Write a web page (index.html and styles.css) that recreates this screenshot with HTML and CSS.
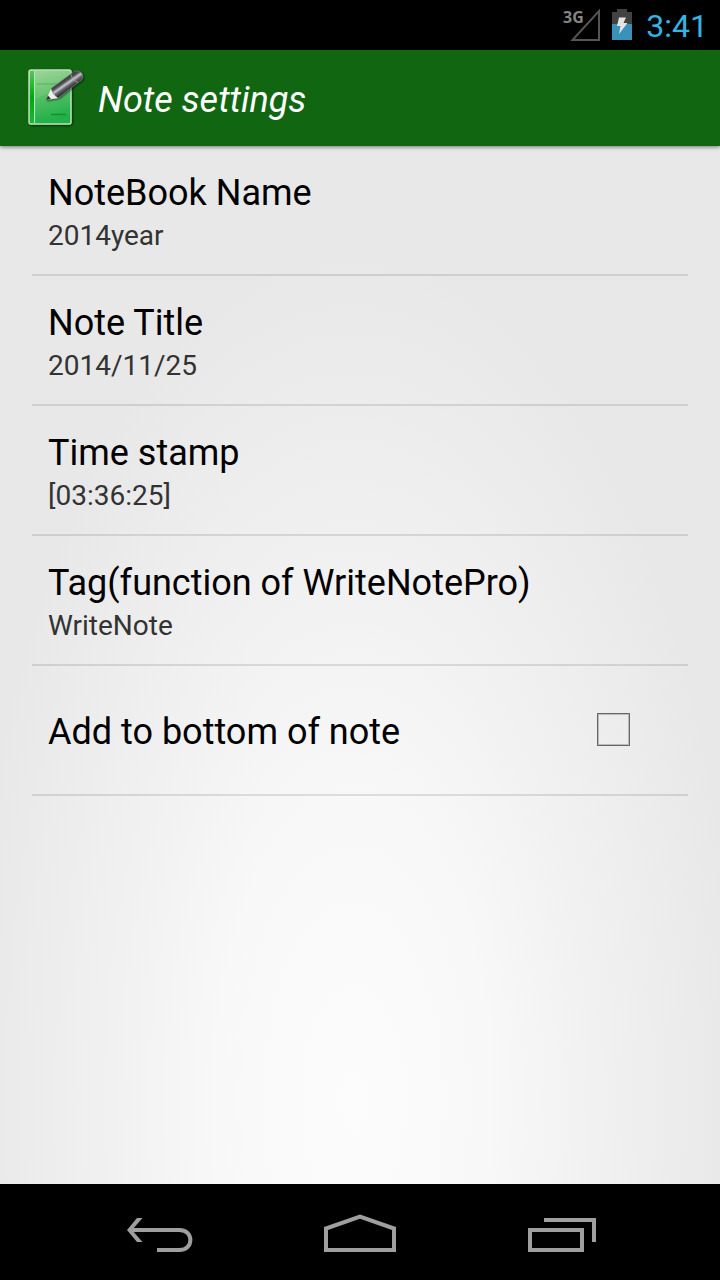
FILE: index.html
```
<!DOCTYPE html>
<html lang="en">

<head>
    <meta charset="UTF-8">
    <meta name="viewport" content="width=device-width, initial-scale=1.0">
    <title>Note settings</title>
    <link rel="stylesheet" href="styles.css">
</head>

<body>

    <div class="status-bar">
        <svg class="signal" width="44" height="48" viewBox="-4 -6 44 48">
            <path d="M36 4V33H9.500Z" fill="none" stroke="#555" stroke-width="2" />
            <text x="0" y="16" class="network">3G</text>
        </svg>
        <svg class="battery" width="22" height="36" viewBox="0 0 22 36">
            <path d="M6 2H16V5H21V17H1V5H6Z" fill="#424242" />
            <path d="M1 17H21V33H1Z" fill="#3993b9" />
            <path d="M8 10.500H15L12.500 16H16.500L8 27L9.500 19H6Z" fill="#e4e4e4" />
        </svg>
        <span class="clock">3:41</span>
    </div>

    <header class="action-bar">
        <svg class="app-icon" width="64" height="64" viewBox="0 0 64 64">
            <defs>
                <linearGradient id="cover" x1="0" y1="0" x2="0.200" y2="1">
                    <stop offset="0" stop-color="#a3d69f" />
                    <stop offset="0.450" stop-color="#6cc773" />
                    <stop offset="1" stop-color="#25b34b" />
                </linearGradient>
                <linearGradient id="spine" x1="0" y1="0" x2="0" y2="1">
                    <stop offset="0" stop-color="#5cc65c" />
                    <stop offset="0.500" stop-color="#00a80c" />
                    <stop offset="1" stop-color="#20b535" />
                </linearGradient>
                <linearGradient id="barrel" gradientUnits="userSpaceOnUse" x1="37" y1="15" x2="44" y2="25">
                    <stop offset="0" stop-color="#333338" />
                    <stop offset="0.250" stop-color="#55555a" />
                    <stop offset="0.450" stop-color="#c8c8cc" />
                    <stop offset="0.650" stop-color="#66666c" />
                    <stop offset="1" stop-color="#202024" />
                </linearGradient>
                <filter id="shade" x="-20%" y="-20%" width="150%" height="150%">
                    <feDropShadow dx="1" dy="1" stdDeviation="1" flood-color="#000" flood-opacity="0.600" />
                </filter>
            </defs>
            <g filter="url(#shade)">
                <rect x="5" y="4" width="42" height="54" rx="2" fill="url(#cover)" stroke="#b4e0b4" stroke-width="1.500" />
                <rect x="6" y="5" width="4" height="52" fill="url(#spine)" />
                <path d="M10.500 5V57" stroke="#a9e9bd" stroke-width="1" />
                <path d="M12 57V32Q28 28 46 14V57Z" fill="#10a83c" fill-opacity="0.150" />
            </g>
            <path d="M13 18H34" stroke="#5eb863" stroke-width="1.300" />
            <path d="M27 48.500H42" stroke="#168d35" stroke-width="1.500" />
            <g filter="url(#shade)">
                <path d="M22 34L27 22.500L34 32Z" fill="#eee" />
                <path d="M22 34L24 29.500L27 33Z" fill="#333" />
                <path d="M27 22.500L51 5Q55 4 57.500 7Q60 10.500 58 13.500L34 32Q29 29 27 22.500Z" fill="url(#barrel)" stroke="#85858a" stroke-width="0.600" />
                <path d="M47 8.500Q48 14 54 16.500" fill="none" stroke="#aaa" stroke-width="0.800" />
            </g>
        </svg>
        <h1>Note settings</h1>
    </header>

    <main>
        <ul class="settings">
            <li>
                <button type="button" class="row">
                    <span class="title">NoteBook Name</span>
                    <span class="summary">2014year</span>
                </button>
            </li>
            <li>
                <button type="button" class="row">
                    <span class="title">Note Title</span>
                    <span class="summary">2014/11/25</span>
                </button>
            </li>
            <li>
                <button type="button" class="row">
                    <span class="title">Time stamp</span>
                    <span class="summary">[03:36:25]</span>
                </button>
            </li>
            <li>
                <button type="button" class="row">
                    <span class="title">Tag(function of WriteNotePro)</span>
                    <span class="summary">WriteNote</span>
                </button>
            </li>
            <li>
                <div class="row check-row">
                    <label class="title" for="addBottom">Add to bottom of note</label>
                    <input type="checkbox" id="addBottom">
                </div>
            </li>
        </ul>
    </main>

    <nav class="nav-bar">
        <button type="button" aria-label="Back">
            <svg width="100" height="70" viewBox="0 0 100 70">
                <path d="M20 35H69.500C84 35 84 55 69.500 55H47" fill="none" stroke="#9f9f9f" stroke-width="4" />
                <path d="M27 23H32.500L22 35L32.500 47H27L17 35Z" fill="#9f9f9f" />
            </svg>
        </button>
        <button type="button" aria-label="Home">
            <svg width="100" height="70" viewBox="0 0 100 70">
                <path d="M16 55V33.500L50 21.500L84 33.500V55Z" fill="none" stroke="#9f9f9f" stroke-width="4" />
            </svg>
        </button>
        <button type="button" aria-label="Recent apps">
            <svg width="100" height="70" viewBox="0 0 100 70">
                <path d="M20 35H72V55H20Z" fill="none" stroke="#9f9f9f" stroke-width="4" />
                <path d="M34 25H84V47" fill="none" stroke="#9f9f9f" stroke-width="4" />
            </svg>
        </button>
    </nav>

</body>

</html>
```

FILE: styles.css
```
* {
    box-sizing: border-box;
}

body {
    display: flex;
    flex-direction: column;
    min-height: 100vh;
    margin: 0;
    font-family: Roboto, sans-serif;
    color: #000;
    background-color: #000;
}

button {
    padding: 0;
    border: none;
    background: none;
    font: inherit;
    color: inherit;
    cursor: pointer;
}

.status-bar {
    display: flex;
    justify-content: flex-end;
    align-items: center;
    height: 50px;
    padding-right: 12px;
    background-color: #000;
}

.network {
    font-size: 16px;
    font-weight: bold;
    font-family: "Open Sans", sans-serif;
    fill: #858585;
}

.battery {
    margin: 0 13px 0 8px;
}

.clock {
    padding-top: 2px;
    font-size: 32px;
    color: #33b5e5;
}

.action-bar {
    display: flex;
    align-items: center;
    gap: 10px;
    height: 96px;
    padding-left: 24px;
    background-color: #116611;
    box-shadow: 0 1px 4px rgba(0, 0, 0, 0.5);
    z-index: 1;
}

h1 {
    margin: 0;
    padding-top: 4px;
    font-size: 36px;
    font-weight: normal;
    font-style: italic;
    color: #fff;
}

main {
    flex: 1;
    padding: 0 32px;
    background: radial-gradient(54% 82% at 49% 92%, #fcfcfc 0%, #f8f8f8 35%, #f1f1f1 62%, #e8e8e8 100%);
}

.settings {
    margin: 0;
    padding: 0;
    list-style: none;
}

.settings li {
    border-bottom: 2px solid rgba(0, 0, 0, 0.11);
}

.row {
    display: flex;
    flex-direction: column;
    justify-content: center;
    width: 100%;
    min-height: 128px;
    padding: 8px 16px 0;
    text-align: left;
}

.title {
    font-size: 36px;
    line-height: 44px;
}

.summary {
    font-size: 28px;
    line-height: 42px;
    color: #333;
}

.check-row {
    flex-direction: row;
    justify-content: space-between;
    align-items: center;
    padding: 0 58px 0 16px;
}

.check-row .title {
    padding-top: 4px;
}

input[type="checkbox"] {
    appearance: none;
    width: 33px;
    height: 33px;
    margin: 0 0 2px;
    border: 1px solid #666;
    box-shadow: inset 0 0 0 1px #bbb;
}

input[type="checkbox"]:checked {
    background-color: #33b5e5;
}

.nav-bar {
    display: flex;
    justify-content: center;
    gap: 100px;
    height: 96px;
    padding: 11px 0 15px;
    background-color: #000;
}

.nav-bar svg {
    display: block;
}
```
